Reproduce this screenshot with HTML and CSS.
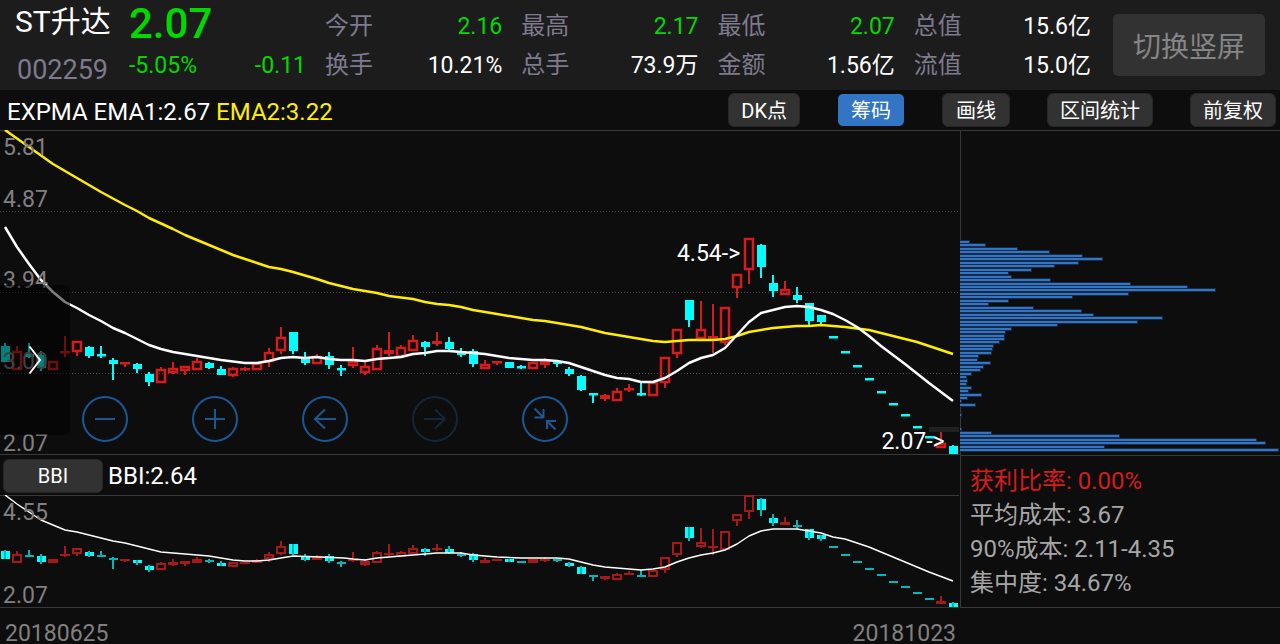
FILE: index.html
```html
<!DOCTYPE html>
<html lang="zh-CN">
<head>
<meta charset="utf-8">
<meta name="viewport" content="width=device-width, initial-scale=1">
<title>ST升达 002259</title>
<link rel="stylesheet" href="styles.css">
</head>
<body>
<header class="quote">
  <div class="stock">
    <h1 class="stock-name">ST升达</h1>
    <span class="stock-code">002259</span>
  </div>
  <div class="price">
    <strong class="price-now">2.07</strong>
    <div class="price-change"><span>-5.05%</span><span>-0.11</span></div>
  </div>
  <dl class="stats">
    <div class="stat"><dt>今开</dt><dd class="down">2.16</dd></div>
    <div class="stat"><dt>最高</dt><dd class="down">2.17</dd></div>
    <div class="stat"><dt>最低</dt><dd class="down">2.07</dd></div>
    <div class="stat"><dt>总值</dt><dd>15.6亿</dd></div>
    <div class="stat"><dt>换手</dt><dd>10.21%</dd></div>
    <div class="stat"><dt>总手</dt><dd>73.9万</dd></div>
    <div class="stat"><dt>金额</dt><dd>1.56亿</dd></div>
    <div class="stat"><dt>流值</dt><dd>15.0亿</dd></div>
  </dl>
  <button class="rotate" type="button">切换竖屏</button>
</header>

<nav class="toolbar">
  <p class="legend">EXPMA EMA1:2.67 <span class="legend-slow">EMA2:3.22</span></p>
  <div class="tools">
    <button class="tool" type="button">DK点</button>
    <button class="tool tool-active" type="button" aria-pressed="true">筹码</button>
    <button class="tool" type="button">画线</button>
    <button class="tool" type="button">区间统计</button>
    <button class="tool" type="button">前复权</button>
  </div>
</nav>

<main class="board">
  <div class="charts">
    <section class="plot plot-main">
      <svg class="canvas" id="main-chart" viewBox="0 130 960 325" preserveAspectRatio="none" aria-label="EXPMA"></svg>
      <span class="axis axis-1">5.81</span>
      <span class="axis axis-2">4.87</span>
      <span class="axis axis-3">3.94</span>
      <span class="axis axis-4">3.00</span>
      <span class="axis axis-5">2.07</span>
      <span class="mark mark-high">4.54-&gt;</span>
      <span class="mark mark-low">2.07-&gt;</span>
      <button class="drawer" type="button" aria-label="展开">
        <svg class="drawer-icon" viewBox="0 0 14 30"><path d="M1.500 1.500 L12 15 L1.500 28.500"/></svg>
      </button>
      <div class="controls">
        <button class="round" type="button" aria-label="缩小"><svg viewBox="0 0 46 46"><circle cx="23" cy="23" r="22"/><path d="M13 23H33"/></svg></button>
        <button class="round" type="button" aria-label="放大"><svg viewBox="0 0 46 46"><circle cx="23" cy="23" r="22"/><path d="M13 23H33M23 13V33"/></svg></button>
        <button class="round" type="button" aria-label="左移"><svg viewBox="0 0 46 46"><circle cx="23" cy="23" r="22"/><path d="M34 23H13M23 13.500L13 23L23 32.500"/></svg></button>
        <button class="round" type="button" aria-label="右移" disabled><svg viewBox="0 0 46 46"><circle cx="23" cy="23" r="22"/><path d="M12 23H33M23 13.500L33 23L23 32.500"/></svg></button>
        <button class="round" type="button" aria-label="收起"><svg viewBox="0 0 46 46"><circle cx="23" cy="23" r="22"/><path d="M12.500 12.500L21 21M12.500 21.500H21.500V13M33.500 33.500L25 25M25 33V25H34"/></svg></button>
      </div>
    </section>
    <div class="subbar">
      <button class="indicator" type="button">BBI</button>
      <span>BBI:2.64</span>
    </div>
    <section class="plot plot-sub">
      <svg class="canvas" id="sub-chart" viewBox="0 495 960 113" preserveAspectRatio="none" aria-label="BBI"></svg>
      <span class="axis axis-top">4.55</span>
      <span class="axis axis-bottom">2.07</span>
    </section>
  </div>
  <aside class="chips">
    <svg class="chips-chart" id="chips-chart" viewBox="960 130 320 325" preserveAspectRatio="none" aria-label="筹码分布"></svg>
    <ul class="facts">
      <li class="fact-profit">获利比率: 0.00%</li>
      <li>平均成本: 3.67</li>
      <li>90%成本: 2.11-4.35</li>
      <li>集中度: 34.67%</li>
    </ul>
  </aside>
</main>
<footer class="dates"><time>20180625</time><time>20181023</time></footer>
<script src="chart.js"></script>
</body>
</html>
```
FILE: styles.css
```css
* { box-sizing: border-box; }

body {
  margin: 0;
  background: #0d0d0d;
  color: #fff;
  font: 24px/28px Roboto, "Noto Sans CJK SC", sans-serif;
}

h1, p, dl, dd, ul { margin: 0; padding: 0; }
ul { list-style: none; }

button {
  border: 0;
  padding: 0;
  font-family: inherit;
  color: inherit;
  white-space: nowrap;
}

.quote {
  display: grid;
  grid-template-columns: 95px minmax(0, 177fr) minmax(0, 769fr) 152px;
  column-gap: 19px;
  align-items: center;
  height: 90px;
  padding: 0 15px;
  background: #1c1c1c;
  white-space: nowrap;
}

.stock { text-align: center; }
.stock-name { font-size: 30px; font-weight: 400; line-height: 44px; }
.stock-code { display: block; margin-top: 6px; font-size: 27px; line-height: 40px; color: #7e7a8e; }

.price { padding: 1px 0 5px; color: #00d900; }
.price-now { display: block; font-size: 42px; font-weight: 500; line-height: 46px; }
.price-change { display: flex; justify-content: space-between; font-size: 23px; line-height: 38px; }

.stats {
  display: grid;
  grid-template-columns: repeat(4, 1fr);
  column-gap: 19px;
  padding: 2px 3px 0 0;
  line-height: 39px;
}
.stat { display: flex; justify-content: space-between; }
.stat dt { color: #7e7a8e; }
.stat dd { font-size: 23px; }
.down { color: #00d900; }

.rotate {
  height: 62px;
  border-radius: 5px;
  background: #323232;
  color: #858585;
  font-size: 28px;
}

.toolbar {
  display: flex;
  justify-content: space-between;
  align-items: center;
  height: 40px;
  padding: 0 4px 0 7px;
  white-space: nowrap;
}
.legend { padding-top: 4px; }
.legend-slow { color: #ffee00; }
.tools { display: flex; gap: 37px; }
.tool {
  min-width: 68px;
  height: 34px;
  padding: 0 12px 2px;
  border: 1px solid #262626;
  border-radius: 6px;
  background: #323232;
  font-size: 20px;
}
.tool-active { border-color: #0d0d0d; background: #3175c4; }

.board {
  display: grid;
  grid-template-columns: 3fr 1fr;
}
.charts, .chips { min-width: 0; }

.plot { position: relative; }
.plot-main { height: 325px; }
.plot-sub { height: 113px; }
.canvas { display: block; width: 100%; height: 100%; }

.axis {
  position: absolute;
  left: 3px;
  color: #808080;
  font-size: 23px;
}
.axis-1 { top: 4px; }
.axis-2 { top: 56px; }
.axis-3 { top: 137px; }
.axis-4 { top: 218px; }
.axis-5 { bottom: -3px; }
.axis-top { top: 4px; }
.axis-bottom { bottom: -2px; }

.mark { position: absolute; font-size: 23px; }
.mark-high { right: 22.9%; top: 110px; }
.mark-low { right: 1.6%; top: 298px; }

.drawer {
  position: absolute;
  left: 0;
  top: 155px;
  width: 70px;
  height: 150px;
  border-radius: 0 6px 6px 0;
  background: rgb(0 0 0 / 50%);
}
.drawer-icon {
  display: block;
  width: 14px;
  height: 30px;
  margin: 0 auto;
  fill: none;
  stroke: #fff;
  stroke-width: 2;
}

.controls {
  position: absolute;
  left: 82px;
  bottom: 13px;
  display: flex;
  gap: 64px;
}
.round { width: 46px; height: 46px; background: none; color: #1b5793; }
.round:disabled { color: #13263a; }
.round svg {
  display: block;
  fill: none;
  stroke: currentColor;
  stroke-width: 2;
}

.subbar {
  display: flex;
  align-items: center;
  gap: 5px;
  height: 40px;
  padding: 1px 0 0 3px;
}
.indicator {
  width: 100px;
  height: 34px;
  border: 1px solid #262626;
  border-radius: 6px;
  background: #323232;
  font-size: 20px;
}

.chips {
  display: flex;
  flex-direction: column;
  border-bottom: 1px solid #383838;
}
.chips-chart { display: block; width: 100%; height: 325px; }
.facts {
  flex: 1;
  padding: 8px 9px 7px;
  border-top: 1px solid #383838;
  border-left: 1px solid #383838;
  color: #a6a6a6;
  line-height: 34px;
  white-space: nowrap;
}
.fact-profit { color: #d51c1c; }

.dates {
  display: flex;
  justify-content: space-between;
  width: 75%;
  padding: 16px 4px 0 5px;
  color: #808080;
  font-size: 23px;
  line-height: 20px;
}

.grid { stroke: #484848; stroke-dasharray: 1 2; }
.rule { fill: #383838; }
.rise { fill: #d51c1c; }
.rise-box { fill: none; stroke: #d51c1c; stroke-width: 2.5; }
.fall { fill: #00ffff; }
.dim .rise { fill: #a81818; }
.dim .rise-box { stroke: #a81818; stroke-width: 2; }
.dim .thin { fill: #00b8b8; }
.line { fill: none; stroke-width: 2.5; stroke-linejoin: round; }
.fast { stroke: #fff; }
.slow { stroke: #ffee00; }
.bbi { stroke: #fff; stroke-width: 1.5; }
.tag { fill: #202020; }
.chip-edge { fill: #192b44; }
.chip { fill: #3175c4; }
```
FILE: chart.js
```js
// Candles: direction, body top, body bottom, high, low (vertical plot units).
const candles = `
f 346 362 343 362|r 351 370 346 370|f 354 357 343 358|f 355 368 351 371|r 361 370 361 370
r 351 353 336 357|r 341 352 341 356|f 347 356 346 358|f 354 356 346 358|f 360 364 358 380
r 362 364 362 367|f 364 369 363 373|f 374 382 372 386|r 369 383 367 383|r 368 373 362 374
r 366 371 366 375|r 361 370 358 370|f 363 368 362 369|f 369 375 366 375|r 368 376 367 377
r 368 370 367 371|r 363 370 362 370|r 352 362 348 367|r 337 351 327 354|f 332 351 332 354
f 357 363 352 365|r 356 364 354 364|f 356 365 352 369|f 368 369 365 376|r 361 366 347 368
r 366 373 362 375|r 348 370 345 370|r 350 354 332 356|r 347 357 345 357|r 340 351 335 351
f 342 347 341 356|r 341 344 332 346|f 342 349 337 351|f 352 355 348 357|f 351 364 349 367
r 364 369 360 369|r 361 363 361 365|f 362 368 362 368|f 366 367 365 369|r 362 369 362 369
r 361 365 358 368|f 361 364 361 367|f 369 374 367 376|f 376 390 375 391|f 393 395 393 403
r 395 399 394 401|r 391 401 388 401|r 388 390 384 392|f 393 394 382 396|r 382 396 382 396
r 357 383 357 388|r 329 354 329 358|f 300 320 300 327|r 329 339 301 341|r 336 339 304 353
r 307 343 307 345|r 274 288 274 298|r 238 270 238 284|f 245 267 244 278|f 283 291 275 297
r 289 295 281 295|f 295 300 287 303|f 303 321 303 325|f 315 322 315 326|f 336 338 336 338
f 351 353 351 353|f 365 367 365 367|f 378 380 378 380|f 391 393 391 393|f 403 405 403 405
f 414 416 414 416|f 426 428 426 428|f 436 438 436 438|r 443 448 432 448|f 446 454 445 454
`.trim().split(/[|\n]/).map(row => {
  const [kind, ...v] = row.split(' ');
  return [kind, ...v.map(Number)];
});

const emaFast = '5,227 17,247 29,264 41,280 53,292 65,302 77,308 89,315 101,321 113,328 125,333 137,339 149,345 161,349 173,352 197,356 221,360 245,363 257,363 269,361 281,358 293,357 305,358 317,357 329,359 341,360 353,360 365,361 377,359 401,357 413,354 425,353 437,351 449,351 461,352 473,353 485,354 497,356 509,358 533,360 545,360 557,361 569,363 581,367 593,371 605,375 617,378 629,379 641,382 653,382 665,378 677,371 689,363 701,358 713,355 725,348 737,335 749,322 761,313 773,310 785,307 797,306 809,307 821,310 833,314 845,320 857,327 869,336 881,346 905,364 929,383 941,392 953,401';
const emaSlow = '5,130 29,147 53,164 89,185 101,192 125,205 137,211 149,218 173,229 185,235 233,255 257,263 269,267 281,269 293,272 317,279 329,283 353,289 365,291 377,293 389,296 413,299 425,302 437,304 449,305 461,307 473,310 497,314 533,320 545,321 581,327 605,333 641,339 653,341 665,342 689,340 713,340 725,339 737,336 749,332 773,328 797,326 809,326 821,325 845,327 869,330 893,336 917,342 953,354';
const bbi = '5,495 17,504 29,512 41,520 53,525 65,530 77,532 113,541 125,543 161,552 209,556 233,560 245,561 257,561 269,560 281,558 293,556 320,557 344,558 353,559 365,560 377,558 401,556 425,554 437,553 461,553 473,555 497,557 521,558 557,558 569,559 581,562 593,565 605,567 641,570 653,569 665,567 677,562 689,558 701,555 713,553 725,550 737,544 749,536 761,531 773,529 797,529 809,531 821,533 833,537 845,539 869,547 929,572 953,581';

// Chip distribution: row height, then bar length.
const chips = [
  [242, 9], [245, 25], [249, 57], [252, 89], [256, 122], [259, 142], [263, 118], [266, 94],
  [270, 71], [273, 48], [277, 51], [280, 90], [284, 170], [287, 227], [290, 255], [294, 168],
  [297, 112], [301, 48], [304, 28], [308, 73], [311, 121], [315, 133], [318, 202], [322, 177],
  [325, 97], [329, 51], [332, 45], [336, 44], [339, 44], [342, 39], [346, 33], [349, 32],
  [353, 31], [356, 18], [360, 17], [363, 30], [367, 23], [370, 20], [374, 11], [377, 6],
  [381, 7], [384, 6], [388, 11], [391, 8], [395, 21], [398, 7], [401, 1], [405, 15],
  [415, 1], [429, 1], [433, 31], [436, 159], [440, 296], [443, 305], [447, 144], [450, 318]
];

const rect = (cls, x, y, w, h) =>
  `<rect class="${cls}" x="${x}" y="${y}" width="${w}" height="${h}"/>`;
const line = (cls, points) => `<polyline class="line ${cls}" points="${points}"/>`;

function drawCandles(scale, minBody) {
  return candles.map(([kind, ...values], i) => {
    const x = 5 + 12 * i;
    const [top, bottom, high, low] = values.map(scale);
    const height = Math.max(minBody, bottom - top);
    if (kind === 'f') {
      const thin = height <= minBody ? ' thin' : '';
      return rect('fall' + thin, x - 4, top, 9, height) +
        rect('fall thin', x - 1, high, 2, low - high);
    }
    const body = height < 5
      ? rect('rise', x - 5, top, 10, height)
      : rect('rise-box', x - 4, top + 1, 8, height - 2);
    return body + rect('rise', x - 1, high, 2, Math.max(0, top - high)) +
      rect('rise', x - 1, bottom, 2, Math.max(0, low - bottom));
  }).join('');
}

document.getElementById('main-chart').innerHTML =
  [211.5, 292.5, 373.5].map(y => `<path class="grid" d="M0 ${y}H960"/>`).join('') +
  rect('rule', 0, 130, 960, 1) + rect('rule', 0, 454, 960, 1) +
  rect('tag', 929, 427, 30, 5) +
  drawCandles(y => y, 2.5) + line('slow', emaSlow) + line('fast', emaFast);

document.getElementById('sub-chart').innerHTML =
  rect('rule', 0, 495, 959, 1) + rect('rule', 0, 607, 959, 1) +
  `<g class="dim">${drawCandles(y => Math.round(607 - (454 - y) * 0.518), 2)}</g>` +
  line('bbi', bbi);

document.getElementById('chips-chart').innerHTML =
  rect('rule', 960, 130, 1, 325) + rect('rule', 960, 130, 320, 1) +
  chips.map(([y, w]) => rect('chip-edge', 960, y - 2, w + 1, 4)).join('') +
  chips.map(([y, w]) => rect('chip', 960, y - 1, w, 2)).join('');
```
